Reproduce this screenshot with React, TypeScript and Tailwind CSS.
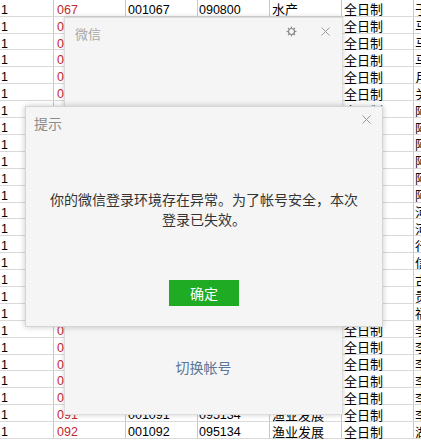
import React from "react";

const gChars = ["于","马","马","马","月","关","阿","阿","阿","阿","阿","阿","河","河","行","信","古","贵","福","李","李","李","李","李","李","湖"];

type Row = { a: string; b: string; c: string; d: string; e: string; f: string; g: string };

const rows: Row[] = Array.from({ length: 26 }, (_, i) => {
  const n = 67 + i;
  const code = String(n).padStart(3, "0");
  const isFish = i >= 24;
  return {
    a: "1",
    b: code,
    c: "001" + code,
    d: i === 0 ? "090800" : isFish ? "095134" : "090800",
    e: i === 0 ? "水产" : isFish ? "渔业发展" : "水产",
    f: "全日制",
    g: gChars[i],
  };
});

const cjk = { fontFamily: '"Noto Sans CJK SC", "Liberation Sans", sans-serif' };
const num = { fontFamily: '"Liberation Sans", Arial, sans-serif' };

function Close({ className }: { className?: string }) {
  return (
    <svg width="9" height="9" viewBox="0 0 9 9" className={className}>
      <path d="M0.5 0.5 L8.5 8.5 M8.5 0.5 L0.5 8.5" stroke="#9a9a9a" strokeWidth="1" fill="none" />
    </svg>
  );
}

function Gear() {
  const teeth = Array.from({ length: 8 }, (_, i) => i * 45);
  return (
    <svg width="11" height="11" viewBox="0 0 11 11">
      <circle cx="5.5" cy="5.5" r="3" stroke="#8a8a8a" strokeWidth="1.2" fill="none" />
      {teeth.map((deg) => (
        <rect key={deg} x="4.9" y="0.6" width="1.2" height="1.8" fill="#8a8a8a" transform={`rotate(${deg} 5.5 5.5)`} />
      ))}
    </svg>
  );
}

export default function App() {
  return (
    <div className="relative w-[421px] h-[440px] overflow-hidden bg-white">
      {/* spreadsheet */}
      <div className="flex flex-col -mt-[0.2px]">
        {rows.map((r, i) => (
          <div key={i} className="flex h-[16.9px] border-b border-[#d9d9d9] text-black">
            <div className="w-[54px] shrink-0 border-r border-[#c8c8c8] pl-[1px] pt-[2px] text-[12.5px] leading-[16px]" style={num}>{r.a}</div>
            <div className="w-[72px] shrink-0 border-r border-[#c8c8c8] pl-[3px] pt-[2px] text-[12.5px] leading-[16px] text-[#c4282f]" style={num}>{r.b}</div>
            <div className="w-[72px] shrink-0 border-r border-[#c8c8c8] pl-[2px] pt-[2px] text-[12.5px] leading-[16px]" style={num}>{r.c}</div>
            <div className="w-[72px] shrink-0 border-r border-[#c8c8c8] pl-[1px] pt-[2px] text-[12.5px] leading-[16px]" style={num}>{r.d}</div>
            <div className="w-[72px] shrink-0 border-r border-[#c8c8c8] pl-[2px] pt-[1.5px] text-[13px] leading-[16px] whitespace-nowrap" style={cjk}>{r.e}</div>
            <div className="w-[72px] shrink-0 border-r border-[#c8c8c8] pl-[2px] pt-[1.5px] text-[13px] leading-[16px]" style={cjk}>{r.f}</div>
            <div className="flex-1 pl-[1px] pt-[1.5px] text-[13px] leading-[16px] overflow-hidden whitespace-nowrap" style={cjk}>{r.g}</div>
          </div>
        ))}
      </div>

      {/* WeChat window */}
      <div className="absolute left-[64px] top-[17px] w-[279px] h-[398px] bg-[#f5f5f5] border border-[#dcdcdc] shadow-[0_0_5px_rgba(0,0,0,0.18)] flex flex-col" style={cjk}>
        <div className="h-[26px] flex items-center pl-[10px] pr-[12px]">
          <span className="text-[13px] text-[#a8a8a8] mt-[6px]">微信</span>
          <div className="ml-auto flex items-center gap-[24px] mt-[1px]">
            <Gear />
            <Close />
          </div>
        </div>
        <div className="mt-auto mb-[37px] text-center text-[14px] leading-[20px] text-[#5b7697]">切换帐号</div>
      </div>

      {/* Tip dialog */}
      <div className="absolute left-[25px] top-[106px] w-[358px] h-[221px] bg-[#f5f5f5] border border-[#d4d4d4] shadow-[0_0_6px_rgba(0,0,0,0.22)] flex flex-col" style={cjk}>
        <div className="h-[32px] flex items-center justify-between pl-[8px] pr-[11px]">
          <span className="text-[14px] text-[#8c8c8c] mt-[1px]">提示</span>
          <Close className="-mt-[8px]" />
        </div>
        <div className="mt-[50px] px-[20px] text-center text-[14px] leading-[20px] text-[#333333]">
          你的微信登录环境存在异常。为了帐号安全，本次登录已失效。
        </div>
        <div className="mt-[51px] flex justify-center">
          <div className="w-[70px] h-[26px] bg-[#1fab23] text-white text-[14px] flex items-center justify-center">确定</div>
        </div>
      </div>
    </div>
  );
}
